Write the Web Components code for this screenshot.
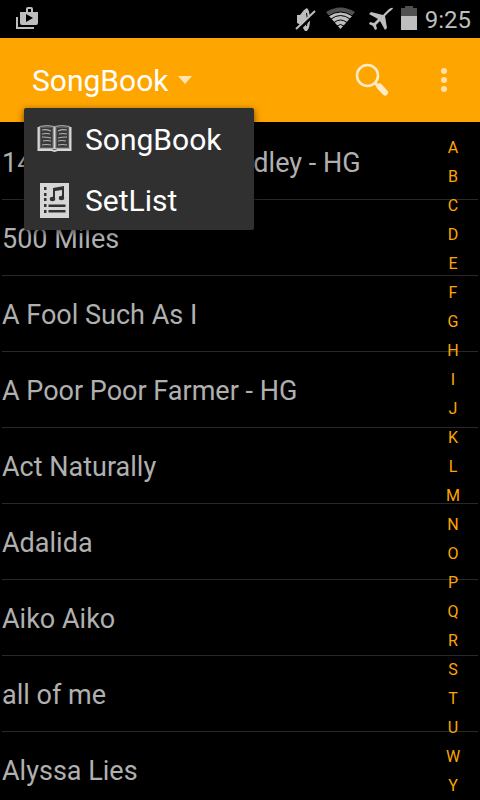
<!DOCTYPE html>
<html lang="en">
<head>
<meta charset="utf-8">
<meta name="viewport" content="width=device-width, initial-scale=1">
<title>SongBook</title>
<style>
  html, body { height: 100%; margin: 0; background: #000; }
  body { overflow: hidden; font-family: Roboto, "Noto Sans", sans-serif; }
</style>
</head>
<body>
<song-app></song-app>
<script>
const define = (name, html) => {
  const template = document.createElement('template');
  template.innerHTML = '<style>*{box-sizing:border-box}svg{display:block;flex:none}button{font:inherit;color:inherit;background:none;border:0;padding:0;margin:0;text-align:left;cursor:pointer}</style>' + html;
  customElements.define(name, class extends HTMLElement {
    constructor() {
      super();
      this.attachShadow({ mode: 'open' }).append(template.content.cloneNode(true));
    }
  });
};

define('status-bar', `
<style>
  :host { display: flex; align-items: center; height: 38px; padding: 0 9px 0 14px; background: #000; color: #bebebe; flex: none; }
  .right { margin-left: auto; display: flex; align-items: center; }
  time { font-size: 24px; line-height: 36px; margin-left: 7px; padding-top: 2px; }
</style>
<svg width="28" height="38" viewBox="14 0 28 38" aria-label="Play Store">
  <path d="M17 17v11h17" fill="none" stroke="#bebebe" stroke-width="2"/>
  <path fill="#bebebe" fill-rule="evenodd" d="M20 12h6v-3q0-2 2-2h3q2 0 2 2v3h5v11q0 2-2 2H22q-2 0-2-2zM28 9v3h3V9zM26 14v8l7-4z"/>
</svg>
<div class="right">
  <svg width="136" height="38" viewBox="282 0 136 38" aria-label="Muted, Wi-Fi, airplane mode, battery">
    <path fill="#bebebe" d="M297 15h3l4-5 3-2q3 3 3 11.500t-3 11.500h-2l-4-6-4-2z"/>
    <path fill="none" stroke="#000" d="M306.500 13q2 6 0 13"/>
    <path d="M298 30.500L317 11.500" stroke="#000" stroke-width="3"/>
    <path d="M296 29L315 11" stroke="#bebebe" stroke-width="2"/>
    <path fill="#505050" d="M326 12q14.500-9 29 0l-14.500 17z"/>
    <path fill="#bebebe" d="M329 16q11.500-8 23 0l-11.500 13z"/>
    <path fill="none" stroke="#000" d="M328.500 16q12-8 24 0M331 19q9.500-7 19 0M334 22.500q6.500-5 13 0M337 26q3.500-3 7 0"/>
    <path fill="#bebebe" d="M393 8q-2-1-6 3l-4 4-12-3-2 2 9 5-4 4-4-1-1 2 4 2 2 4 2-1-1-4 4-4 5 9 2-2-2-12 4-4q4-3 4-4z"/>
    <path fill="#505050" d="M401 8h4V6h8v2h4v8h-16z"/>
    <path fill="#bebebe" d="M401 16h16v14h-16z"/>
  </svg>
  <time>9:25</time>
</div>`);

define('app-bar', `
<style>
  :host { display: flex; align-items: center; justify-content: space-between; height: 84px; padding: 0 24px 0 32px; background: #ffa500; color: #fff; flex: none; }
  .title { display: flex; align-items: center; gap: 9px; padding-top: 2px; font-size: 30px; line-height: 36px; }
  .actions { display: flex; align-items: center; gap: 42px; }
</style>
<button class="title" aria-haspopup="menu" aria-expanded="true"><slot></slot>
  <svg width="16" height="12" viewBox="0 0 16 12"><path d="M1 1h14L8 9z" fill="#fff" fill-opacity=".7"/></svg>
</button>
<div class="actions">
  <button aria-label="Search"><svg width="36" height="36" viewBox="354 62 36 36">
    <circle cx="367.500" cy="75.500" r="10.500" fill="none" stroke="#ffebc8" stroke-width="2.600"/>
    <path d="M375 83l3 3" stroke="#ffebc8" stroke-width="3"/>
    <path d="M379.500 86.500l5.500 6" stroke="#ffebc8" stroke-width="6" stroke-linecap="round"/>
  </svg></button>
  <button aria-label="More options"><svg width="24" height="36" viewBox="0 0 24 36" fill="#ffe0aa">
    <circle cx="12" cy="9" r="3"/><circle cx="12" cy="18" r="3"/><circle cx="12" cy="27" r="3"/>
  </svg></button>
</div>`);

define('menu-item', `
<style>
  :host { display: block; }
  button { display: flex; align-items: center; gap: 12px; width: 100%; height: 61px; padding: 2px 12px 0; font-size: 30px; line-height: 36px; }
</style>
<button role="menuitem"><slot name="icon"></slot><slot></slot></button>`);

define('nav-menu', `
<style>
  :host { display: block; background: #303030; color: #fff; border-radius: 2px; box-shadow: 0 2px 7px rgba(0,0,0,.6); }
</style>
<div role="menu">
  <menu-item><svg slot="icon" width="37" height="36" viewBox="36 122 37 36">
    <path fill="#5a5a5a" stroke="#aaa" stroke-width="1" d="M39.500 126.500q8-2 15 0 7-2 15 0v22h-30z"/>
    <path fill="none" stroke="#d6d6d6" stroke-width="2" d="M38.500 127v23h13l3 1 3-1h13v-23"/>
    <path stroke="#d6d6d6" stroke-width="2" d="M54.500 127v22"/>
    <path fill="#3a3a3a" d="M41 128h11v19H41zM57 128h11v19H57z"/>
    <path fill="none" stroke="#b4b4b4" stroke-width="1.200" d="M42 130q4-1 9 1M42 134q5-1 8 0M42 137q5 0 9 1M43 141q4-1 8 0M42 145q4-1 9 0M58 131q4-2 9-1M59 134q4-1 8 0M58 138q4-1 9-1M58 141q4-1 8 0M58 145q4-1 9 0"/>
  </svg>SongBook</menu-item>
  <menu-item><svg slot="icon" width="37" height="36" viewBox="36 182 37 36">
    <path fill="#d6d6d6" d="M40 182h29v35H40z"/>
    <path fill="#303030" d="M44 186h2.500v3H44zM44 192h2.500v3H44zM44 197h2.500v3H44zM44 203h2.500v3H44zM44 209h2.500v3H44zM48.500 203.500h17v2.500h-17zM48.500 209h17v2.500h-17z"/>
    <path fill="#303030" d="M53 187l11-2v12h-2v-8l-7 1v8h-2z"/>
    <ellipse cx="52.500" cy="198" rx="2.700" ry="2.200" fill="#303030"/><ellipse cx="61.500" cy="197" rx="2.700" ry="2.200" fill="#303030"/>
  </svg>SetList</menu-item>
</div>`);

define('song-row', `
<style>
  :host { display: flex; gap: 221px; height: 76px; padding-top: 4px; border-bottom: 1px solid #282828; color: #b0b0b0; font-size: 27px; line-height: 71px; white-space: nowrap; flex: none; }
</style>
<slot></slot>`);

define('song-list', `
<style>
  :host { display: flex; flex-direction: column; padding: 2px 2px 0; }
</style>
<slot></slot>`);

const letters = [...'ABCDEFGHIJKLMNOPQRSTUWY'];
define('letter-index', `
<style>
  :host { display: block; padding-top: 11px; color: #ffa500; }
  nav { display: flex; flex-direction: column; }
  button { width: 30px; height: 29px; text-align: center; font-size: 16px; line-height: 29px; flex: none; }
</style>
<nav aria-label="Jump to letter">${letters.map(l => `<button>${l}</button>`).join('')}</nav>`);

define('song-app', `
<style>
  :host { position: relative; display: flex; flex-direction: column; height: 100vh; overflow: hidden; background: #000; }
  main { position: relative; flex: 1; min-height: 0; overflow: hidden; }
  letter-index { position: absolute; top: 0; right: 12px; }
  nav-menu { position: absolute; left: 24px; top: 108px; width: 230px; }
</style>
<status-bar></status-bar>
<app-bar>SongBook</app-bar>
<main>
  <song-list>
    <song-row><span>14</span><span>dley - HG</span></song-row>
    <song-row>500 Miles</song-row>
    <song-row>A Fool Such As I</song-row>
    <song-row>A Poor Poor Farmer - HG</song-row>
    <song-row>Act Naturally</song-row>
    <song-row>Adalida</song-row>
    <song-row>Aiko Aiko</song-row>
    <song-row>all of me</song-row>
    <song-row>Alyssa Lies</song-row>
  </song-list>
  <letter-index></letter-index>
</main>
<nav-menu></nav-menu>`);
</script>
</body>
</html>
